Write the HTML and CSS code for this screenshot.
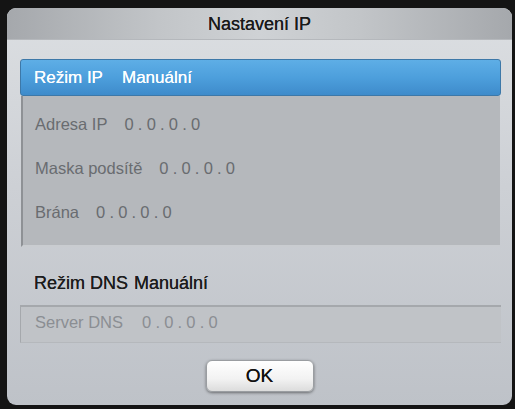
FILE: index.html
```html
<!DOCTYPE html>
<html lang="cs">
<head>
<meta charset="UTF-8">
<title>Nastavení IP</title>
<link rel="stylesheet" href="styles.css">
</head>
<body>
<div class="dialog">
	<div class="title">Nastavení IP</div>
	<div class="content">
		<div class="mode-bar"><span class="lbl">Režim IP</span><span>Manuální</span></div>
		<div class="ip-panel">
			<div class="row"><span class="lbl">Adresa IP</span><span class="val">0.0.0.0</span></div>
			<div class="row"><span class="lbl">Maska podsítě</span><span class="val">0.0.0.0</span></div>
			<div class="row"><span class="lbl">Brána</span><span class="val">0.0.0.0</span></div>
		</div>
		<div class="dns-mode"><span class="lbl">Režim DNS</span><span>Manuální</span></div>
		<div class="dns-box"><span class="lbl">Server DNS</span><span class="val">0.0.0.0</span></div>
		<div class="actions"><button class="okbtn">OK</button></div>
	</div>
</div>
</body>
</html>
```

FILE: styles.css
```css
html, body {
	margin: 0;
	padding: 0;
}
body {
	width: 515px;
	height: 409px;
	background: #141414;
	font-family: "Liberation Sans", Arial, sans-serif;
	overflow: hidden;
}
.dialog {
	margin: 8px 3px 0 7px;
	height: 397px;
	border-radius: 9px;
	overflow: hidden;
	display: flex;
	flex-direction: column;
	background: linear-gradient(to bottom, #dcdfe2 0%, #cdd0d5 45%, #bec2c8 100%);
}
.title {
	height: 32px;
	flex: none;
	display: flex;
	align-items: center;
	justify-content: center;
	padding-top: 2px;
	box-sizing: border-box;
	font-size: 18px;
	color: #1a1a1a;
	text-shadow: 0 0 0.5px #1a1a1a;
	background: linear-gradient(to right, #a5a8ac 0%, #c2c5c8 30%, #cfd2d5 50%, #c2c5c8 70%, #a5a8ac 100%);
	border-bottom: 1px solid #b5b8bc;
}
.content {
	flex: 1;
	display: flex;
	flex-direction: column;
	padding: 19px 11px 0 13px;
}
.mode-bar {
	height: 35px;
	display: flex;
	align-items: center;
	padding-left: 13px;
	color: #ffffff;
	font-size: 17px;
	text-shadow: 0 0 0.5px #ffffff;
	border: 1px solid #3d78a8;
	border-radius: 3px;
	background: linear-gradient(to bottom, #5eaee6 0%, #4d9fdc 50%, #3e8bcb 100%);
}
.mode-bar .lbl {
	width: 88px;
}
.ip-panel {
	margin: 0 1px;
	height: 151px;
	display: flex;
	flex-direction: column;
	padding: 6px 0 0 12px;
	background: #b5b8bc;
	border-left: 2px solid #8e9195;
	border-bottom: 2px solid #c9ccd0;
	box-sizing: border-box;
}
.row {
	height: 44px;
	display: flex;
	align-items: center;
	font-size: 16.5px;
	color: #696c70;
}
.row .lbl, .dns-box .lbl {
	margin-right: 17px;
}
.val {
	letter-spacing: 4.2px;
}
.dns-mode {
	margin-top: 23px;
	height: 26px;
	display: flex;
	align-items: center;
	padding-left: 14px;
	font-size: 18px;
	color: #1c1c1c;
	text-shadow: 0 0 0.4px #1c1c1c;
}
.dns-mode .lbl {
	margin-right: 6px;
}
.dns-box {
	margin-top: 9px;
	height: 38px;
	display: flex;
	align-items: center;
	padding: 0 0 4px 14px;
	font-size: 16.5px;
	color: #8b8e93;
	background: #c0c3c7;
	border-top: 2px solid #a5a8ac;
	border-left: 1px solid #a5a8ac;
	border-bottom: 1px solid #b5b8bc;
	box-sizing: border-box;
}
.dns-box .lbl {
	margin-right: 19px;
}
.actions {
	display: flex;
	justify-content: center;
	padding-top: 17px;
}
.okbtn {
	width: 108px;
	height: 32px;
	padding: 0;
	font-family: "Liberation Sans", Arial, sans-serif;
	font-size: 19px;
	color: #111111;
	text-shadow: 0 0 0.5px #111111;
	border: 1px solid #9a9da1;
	border-radius: 6px;
	background: linear-gradient(to bottom, #ffffff 0%, #f2f2f2 60%, #dcdcdc 100%);
	box-shadow: 0 1px 3px rgba(0, 0, 0, 0.45);
	margin-left: -2px;
}
```
